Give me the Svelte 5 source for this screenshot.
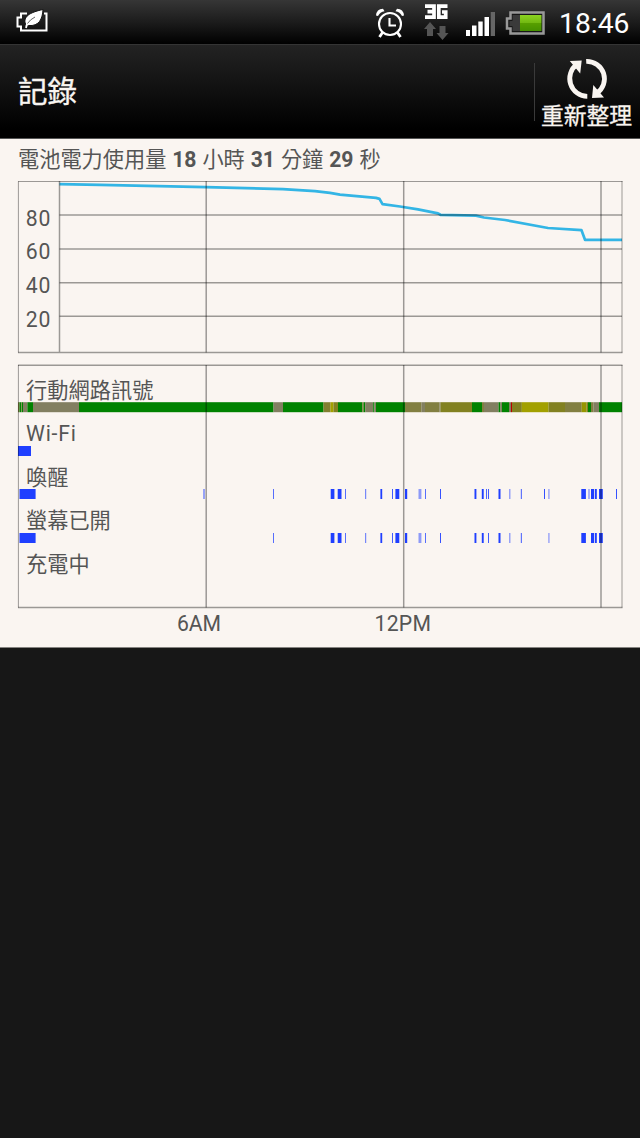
<script>
  const levels = [
    { label: '80', line: 215, base: 225.7 },
    { label: '60', line: 249, base: 259.3 },
    { label: '40', line: 282.7, base: 293.2 },
    { label: '20', line: 316.3, base: 326.8 }
  ];
  const hours = [206.2, 403.7, 601];

  const green = '#008200';
  const gray = '#827f61';
  const olive = '#828121';
  const mid = '#827f41';
  const yellow = '#a2a000';
  const signal = [
    [18, 19.5, mid], [19.5, 21.4, green], [21.4, 22, mid], [22, 23, green], [23, 27.4, gray],
    [27.4, 33, green], [33, 79, gray], [79, 273.5, green], [273.5, 283, gray], [283, 323.5, green],
    [323.5, 330.5, '#827f30'], [330.5, 333.5, yellow], [333.5, 338, olive], [338, 362.3, green],
    [362.3, 363.7, mid], [363.7, 365.2, green], [365.2, 373.2, gray], [373.2, 374.3, green],
    [374.3, 376, gray], [376, 405, green], [405, 421.5, mid], [421.5, 425, gray], [425, 439.5, mid],
    [439.5, 440.5, gray], [440.5, 472, olive], [472, 482, green], [482, 484, mid], [484, 498.6, gray],
    [498.6, 500.4, green], [500.4, 502, gray], [502, 509, green], [509, 511, gray], [511, 512, '#bd0000'],
    [512, 521.8, olive], [521.8, 548.5, yellow], [548.5, 565, olive], [565, 581.7, mid],
    [581.7, 586.5, '#979500'], [586.5, 588, olive], [588, 591, green], [591, 593.5, mid],
    [593.5, 599, gray], [599, 622, green]
  ];

  const shared = [
    [19.5, 35.6], [273, 274, 0.75], [330.7, 334.4], [337.7, 341.5], [345, 346, 0.75], [365, 366.2, 0.6],
    [380.4, 382.2], [392, 393, 0.85], [395.4, 399.3], [405, 407.2], [418.5, 421.4, 0.5], [425, 426, 0.75],
    [440, 441, 0.9], [474.5, 476.4], [481.8, 483.7], [488, 489, 0.85], [498.5, 500.5],
    [509, 510.5, 0.45], [520.8, 522, 0.7], [548.2, 549.6, 0.45], [581.3, 585.9], [591, 594],
    [594.8, 596.8], [599, 602.8]
  ];
  const awakeOnly = [[203, 205, 0.45], [486, 487, 0.8], [544, 545, 0.9], [588.2, 589.8, 0.45], [616, 617, 0.9]];
  const tracks = [
    { label: 'Wi-Fi', base: 440.5, top: 446, marks: [[18, 31]] },
    { label: '喚醒', base: 484.5, top: 489, marks: [...shared, ...awakeOnly] },
    { label: '螢幕已開', base: 528, top: 533, marks: shared },
    { label: '充電中', base: 571.5, top: 577, marks: [] }
  ];
</script>

<div class="screen">
  <header class="status">
    <svg class="saver" width="34" height="24" viewBox="0 0 34 24">
      <path d="M11 2.500H5V6.500H1.500V15.500H5V19.500H30.500V2.500H28" fill="none" stroke="#fff" stroke-width="2" />
      <path d="M9 16L9.500 13C7 6 13 1.500 27 -1.500C26.500 8 23 15.500 12.500 14.500Z" fill="#fff" stroke="#151515" stroke-width="1" />
      <path d="M11.500 12.500Q14 8.500 19 6" fill="none" stroke="#555" stroke-width="0.900" />
      <path d="M10 17L11 13" stroke="#fff" stroke-width="1.800" />
    </svg>
    <div class="tray">
      <svg class="alarm" width="30" height="32" viewBox="375 8 30 32">
        <g fill="none" stroke="#fff" stroke-width="2.100">
          <circle cx="390" cy="24" r="11" />
          <path d="M389.500 18V25.500H396" />
          <path d="M382.500 32.500L379.500 37M397.500 32.500L400.500 37" stroke-width="2.800" />
        </g>
        <path d="M376 15.500Q376.500 9 383 8.700L384.500 11.200Q380 12 378 16ZM404 15.500Q403.500 9 397 8.700L395.500 11.200Q400 12 402 16Z" fill="#fff" />
      </svg>
      <div class="data">
        <svg width="26" height="38" viewBox="423 4 26 38">
          <g fill="none" stroke="#fff" stroke-width="3.700">
            <path d="M425 6.200H434V17.200H425M427.500 11.700H434" />
            <path d="M447.500 6.200H438.800V17.200H445.700V12H442" />
          </g>
          <path d="M430 22L436 29H433V36H427V29H424ZM442.500 40L436.500 33H439.500V26H445.500V33H448.500Z" fill="#555" />
        </svg>
      </div>
      <svg class="bars" width="31" height="26" viewBox="465 11 31 26">
        <path d="M466 30H470V36H466ZM472 25.500H476.500V36H472ZM478.300 21.500H482.700V36H478.300ZM484.500 17H489V36H484.500Z" fill="#fff" />
        <path d="M490.700 12H495V36H490.700Z" fill="#666" />
      </svg>
      <svg class="battery" width="40" height="25" viewBox="505 11 40 25">
        <defs>
          <linearGradient id="charge" x2="0" y2="1">
            <stop offset="0" stop-color="#8cd321" /><stop offset=".48" stop-color="#72b912" />
            <stop offset=".5" stop-color="#58a000" /><stop offset="1" stop-color="#459000" />
          </linearGradient>
        </defs>
        <path d="M510.500 12.500H543.500V33.500H510.500V28.500H507V18.500H510.500Z" fill="#171717" stroke="#999" stroke-width="2.500" />
        <path d="M512.500 15H520V31H512.500V26H509.500V21H512.500Z" fill="#3a3a3a" />
        <path d="M520 15H541.500V31H520Z" fill="url(#charge)" />
      </svg>
      <span class="clock">18:46</span>
    </div>
  </header>

  <nav class="actionbar">
    <h1>記錄</h1>
    <button class="refresh">
      <svg width="42" height="42" viewBox="566 58 42 42">
        <g fill="none" stroke="#f9f5f1" stroke-width="4.800">
          <path d="M587.300 96.300A17.700 17.700 0 0 1 577 64.300" />
          <path d="M586.200 61.300A17.500 17.500 0 0 1 596.700 93.300" />
        </g>
        <path d="M569.800 61L581.700 60.500L580.200 73.500ZM604 97.500L592 98L593.300 85Z" fill="#f9f5f1" />
      </svg>
      <span>重新整理</span>
    </button>
  </nav>

  <main>
    <h2>電池電力使用量 <b>18</b> 小時 <b>31</b> 分鐘 <b>29</b> 秒</h2>

    <svg class="chart" width="640" height="174" viewBox="0 180 640 174">
      <polyline
        points="59.500,184.200 100,184.800 206,187.200 283,189.100 315,191.100 330,192.900 340,194.700 376,197.900 379.500,198.900 382.500,204.200 400,206.500 418,209.400 438,213.400 440.500,214.800 476,215.600 484,217.500 505,220 548,228 581.500,230.200 585,239.800 622,239.800"
        fill="none" stroke="#33b5e5" stroke-width="2.700" stroke-linejoin="round" />
      <g class="grid">
        <path class="edge" d="M18.400 181.500V352.500M18 181.500H622.500M622 181V352.500" />
        <path d="M18 352.600H622.500M59.500 181V352.500" />
        {#each levels as level}<path d={`M59.500 ${level.line}H622`} />{/each}
        {#each hours as x}<path d={`M${x} 181V352.500`} />{/each}
      </g>
      {#each levels as level}
        <text x="25.800" y={level.base} textLength="24.500">{level.label}</text>
      {/each}
    </svg>

    <svg class="chart timeline" width="640" height="275" viewBox="0 363 640 275">
      {#each signal as [from, to, color]}
        <rect x={from} y="402.200" width={to - from + 0.05} height="10" fill={color} />
      {/each}
      {#each tracks as track}
        {#each track.marks as [from, to, alpha]}
          <rect x={from} y={track.top} width={to - from} height="10" fill="#1f3fff" opacity={alpha ?? 1} />
        {/each}
      {/each}
      <g class="grid">
        <path class="edge" d="M18.400 365V607.500M622 365V607.500" />
        <path d="M18 365.200H622.500M18 607.500H622.500" />
        {#each hours as x}<path d={`M${x} 365V607.500`} />{/each}
      </g>
      <text x="26" y="397.500" textLength="127.500">行動網路訊號</text>
      {#each tracks as track}
        <text x="26" y={track.base} textLength={track.label === 'Wi-Fi' ? 50 : null}>{track.label}</text>
      {/each}
      <text x="177" y="631" textLength="44">6AM</text>
      <text x="374.500" y="631" textLength="56.500">12PM</text>
    </svg>
  </main>
</div>

<style>
  :global(body) { background: #171717; }
  .screen {
    width: 640px;
    height: 1138px;
    display: flex;
    flex-direction: column;
    background: #171717;
    font-family: Roboto, "Noto Sans CJK TC", sans-serif;
  }
  .status {
    height: 44px;
    display: flex;
    justify-content: space-between;
    align-items: flex-start;
    padding: 0 11px 0 16px;
    box-sizing: border-box;
    background: linear-gradient(#363636, #1c1c1c 50%, #000);
    color: #fff;
  }
  .saver { margin-top: 11px; overflow: visible; }
  .tray { display: flex; align-items: flex-start; }
  .alarm { margin: 8px 18px 0 0; }
  .data { margin: 4px 16px 0 0; height: 38px; }
  .bars { margin: 11px 9px 0 0; }
  .battery { margin: 11px 14px 0 0; }
  .clock { width: 70px; font-size: 28.300px; line-height: 47px; white-space: nowrap; }
  .actionbar {
    height: 94.500px;
    flex: none;
    box-sizing: border-box;
    display: flex;
    justify-content: space-between;
    align-items: center;
    padding-left: 18px;
    border-top: 1px solid #343434;
    border-bottom: 1px solid #555;
    background: linear-gradient(#232323, #000 90%);
    color: #f9f5f1;
  }
  h1 {
    margin: 2px 0 0;
    font-size: 29.500px;
    font-weight: 400;
    line-height: 40px;
    -webkit-text-stroke: 0.400px #f9f5f1;
  }
  .refresh {
    width: 106px;
    height: 92px;
    display: flex;
    flex-direction: column;
    align-items: center;
    border: 0;
    padding: 13px 1px 0 0;
    background: linear-gradient(#3a3a3a, #3a3a3a) 0 18px / 1px 58px no-repeat;
    color: #f9f5f1;
    font: 22.800px/30px Roboto, "Noto Sans CJK TC", sans-serif;
    white-space: nowrap;
  }
  .refresh svg { flex: none; }
  .refresh span { margin-top: 2px; -webkit-text-stroke: 0.300px #f9f5f1; }
  main {
    height: 509px;
    flex: none;
    box-sizing: border-box;
    border-bottom: 1px solid #858380;
    background: #faf5f1;
    color: #555;
    display: flex;
    flex-direction: column;
  }
  h2 {
    margin: 6px 0 5.500px 18px;
    font-size: 21.200px;
    line-height: 30px;
    font-weight: 400;
    word-spacing: 0.650px;
    white-space: nowrap;
  }
  .chart { display: block; flex: none; }
  .timeline { margin-top: 9px; }
  .chart text { font-size: 21.200px; fill: #555; }
  .grid { fill: none; stroke: #000; stroke-opacity: 0.38; stroke-width: 1.500; }
  .grid .edge { stroke-width: 1; }
</style>
